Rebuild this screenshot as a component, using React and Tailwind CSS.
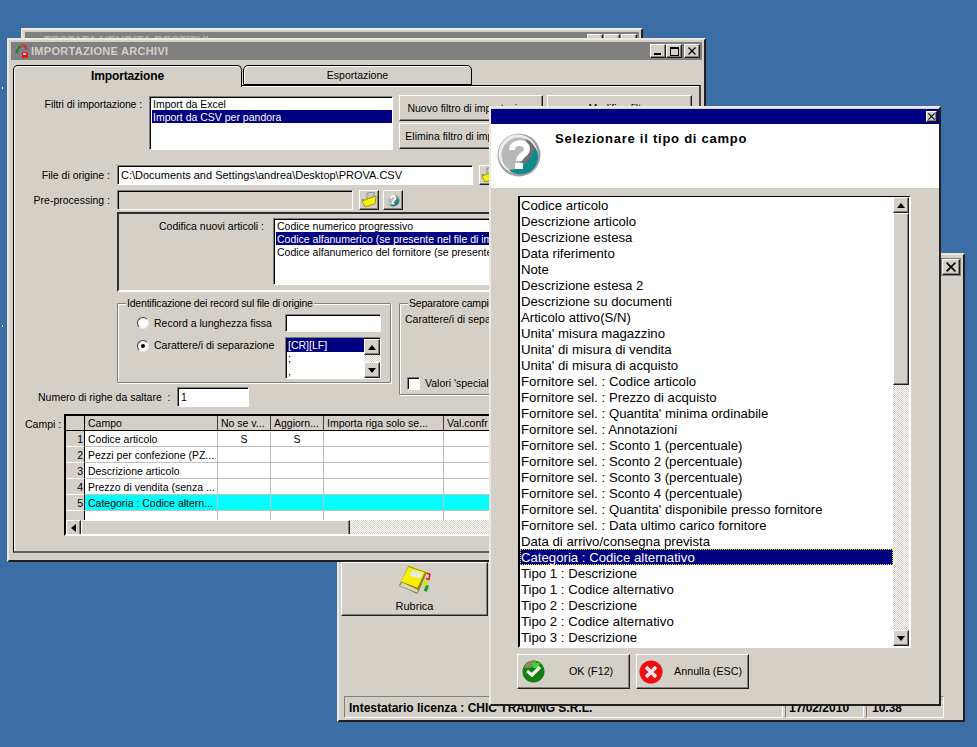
const raised = "border border-t-white border-l-white border-r-[#202020] border-b-[#202020] shadow-[inset_-1px_-1px_0_#808080] bg-[#d4d0c8]";
const sunken = "border border-t-[#808080] border-l-[#808080] border-r-white border-b-white shadow-[inset_1px_1px_0_#000000]";
const frame = "border-2 border-t-[#ece9e1] border-l-[#ece9e1] border-r-[#202020] border-b-[#202020] bg-[#d4d0c8]";
const checker = "bg-[repeating-conic-gradient(#d4d0c8_0_25%,#ffffff_0_50%)] bg-size-[2px_2px]";

const campi = [
  "Codice articolo",
  "Descrizione articolo",
  "Descrizione estesa",
  "Data riferimento",
  "Note",
  "Descrizione estesa 2",
  "Descrizione su documenti",
  "Articolo attivo(S/N)",
  "Unita' misura magazzino",
  "Unita' di misura di vendita",
  "Unita' di misura di acquisto",
  "Fornitore sel. : Codice articolo",
  "Fornitore sel. : Prezzo di acquisto",
  "Fornitore sel. : Quantita' minima ordinabile",
  "Fornitore sel. : Annotazioni",
  "Fornitore sel. : Sconto 1 (percentuale)",
  "Fornitore sel. : Sconto 2 (percentuale)",
  "Fornitore sel. : Sconto 3 (percentuale)",
  "Fornitore sel. : Sconto 4 (percentuale)",
  "Fornitore sel. : Quantita' disponibile presso fornitore",
  "Fornitore sel. : Data ultimo carico fornitore",
  "Data di arrivo/consegna prevista",
  "Categoria : Codice alternativo",
  "Tipo 1 : Descrizione",
  "Tipo 1 : Codice alternativo",
  "Tipo 2 : Descrizione",
  "Tipo 2 : Codice alternativo",
  "Tipo 3 : Descrizione",
];

const righe = [
  { n: "1", campo: "Codice articolo", a: "S", b: "S" },
  { n: "2", campo: "Pezzi per confezione (PZ..." },
  { n: "3", campo: "Descrizione articolo" },
  { n: "4", campo: "Prezzo di vendita (senza ..." },
  { n: "5", campo: "Categoria : Codice altern...", sel: true },
];

const HelpBall = ({ size }) => (
  <svg width={size} height={size} viewBox="0 0 44 44">
    <circle cx="22" cy="22" r="21.5" fill="#a0a0a0" />
    <circle cx="21" cy="21" r="19.5" fill="#ececec" />
    <circle cx="22" cy="22" r="17.5" fill="#b8b8b8" />
    <path d="M29 6A17.5 17.5 0 0 1 38 15C36 26 28 33 17 36C25 30 32 20 29 6Z" fill="#707070" />
    <path d="M38 14A17.5 17.5 0 0 1 12 37C25 36 35 27 38 14Z" fill="#0f8a8a" />
    <path d="M15 17C15 8 30 8 30 16C30 22 22 22 22 28" fill="none" stroke="#ffffff" strokeWidth="6" />
    <rect x="18" y="30" width="8" height="6" fill="#ffffff" />
  </svg>
);

const FolderIcon = () => (
  <svg width="16" height="16" viewBox="0 0 16 16">
    <path d="M6 1L13 0V10L6 11Z" fill="#c8c8c8" stroke="#707070" strokeWidth="0.6" />
    <path d="M1 9L9 6L15 4L14 12L4 15Z" fill="#f5f000" stroke="#7c7a10" strokeWidth="0.7" />
    <rect x="1" y="7" width="1.5" height="1.5" fill="#5c8a20" />
  </svg>
);

const TitleIcon = () => (
  <svg width="16" height="16" viewBox="0 0 16 16">
    <path d="M1 9L5 2L8 4L5 6L4 11Z" fill="#2e7d32" />
    <path d="M7 1L12 2L14 7L11 6L9 4Z" fill="#d03030" />
    <rect x="8" y="9" width="6" height="6" fill="#e02020" />
    <rect x="9" y="10" width="3" height="2" fill="#e8c0c0" />
  </svg>
);

const BookIcon = () => (
  <svg width="34" height="31" viewBox="0 0 33 30">
    <path d="M28 8L31 9L30 14L27 13" fill="none" stroke="#e01010" strokeWidth="1.4" />
    <path d="M27 19L30 20L28 26L25 25Z" fill="#12a030" />
    <path d="M26 14L29 15L27 21L24 20Z" fill="#e8e000" />
    <path d="M10 1L28 7L19 28L1 20Z" fill="#8a8410" />
    <path d="M10 2L26 7L19 22L3 16Z" fill="#f4f000" />
    <path d="M14 5L24 8L21 13L11 10Z" fill="#e8e8e8" />
    <path d="M2 20L19 27L19 24L4 17Z" fill="#d8d8c8" />
  </svg>
);

const CheckBall = () => (
  <svg width="23" height="23" viewBox="0 0 23 23">
    <circle cx="11.5" cy="11.5" r="11" fill="#12800f" />
    <path d="M2 8A10 10 0 0 1 15 1L9 8Z" fill="#8a8a60" />
    <path d="M10 3L18 3L16 8L11 8Z" fill="#30e030" />
    <path d="M5 11L10 15L18 7" fill="none" stroke="#f4f4f4" strokeWidth="3.2" />
  </svg>
);

const CrossBall = () => (
  <svg width="24" height="24" viewBox="0 0 24 24">
    <circle cx="12" cy="12" r="11.5" fill="#ee1010" />
    <path d="M7 7L17 17M17 7L7 17" fill="none" stroke="#f4e8e8" strokeWidth="3.6" />
  </svg>
);

const Arrow = ({ dir }) => {
  if (dir === "left") {
    return (
      <svg width="5" height="8" viewBox="0 0 5 8">
        <path d="M5 0V8L0 4Z" fill="#000000" />
      </svg>
    );
  }
  return (
    <svg width="8" height="5" viewBox="0 0 8 5">
      <path d={dir === "down" ? "M0 0H8L4 5Z" : "M0 5H8L4 0Z"} fill="#000000" />
    </svg>
  );
};

const ScrollBtn = ({ dir, className }) => (
  <div className={`${raised} flex items-center justify-center ${className}`}>
    <Arrow dir={dir} />
  </div>
);

const WinBtn = ({ children }) => (
  <div className={`${raised} w-[16px] h-[14px] flex items-center justify-center`}>{children}</div>
);

const CloseGlyph = ({ size = 8 }) => (
  <svg width={size} height={size} viewBox="0 0 8 8">
    <path d="M0.5 0.5L7.5 7.5M7.5 0.5L0.5 7.5" stroke="#000000" strokeWidth="1.4" />
  </svg>
);

const Rubrica = () => (
  <div className={`${raised} w-[147px] h-[54px] flex flex-col items-center pt-[2px] ml-[2px] shrink-0`}>
    <BookIcon />
    <span className="mt-[3px] text-[11px]">Rubrica</span>
  </div>
);

const BackWindows = () => (
  <>
    <div className={`${frame} absolute left-[21px] top-[28px] w-[622px] h-[100px]`}>
      <div className="m-[2px] h-[18px] bg-[#808080] flex items-center justify-between pl-[5px] pr-[2px] overflow-hidden">
        <span className="font-bold text-[#b0aea8] whitespace-nowrap pl-[14px]">TESTATA VENDITA RESTITUI</span>
        <div className="flex gap-[1px]">
          <WinBtn />
          <WinBtn />
          <WinBtn />
        </div>
      </div>
    </div>

    <div className={`${frame} absolute left-[337px] top-[253px] w-[628px] h-[469px] flex flex-col`}>
      <div className="h-[18px] mt-[3px] mx-[2px] bg-[#808080] flex justify-end items-center pr-[1px]">
        <div className={`${raised} w-[18px] h-[16px] flex items-center justify-center`}>
          <CloseGlyph size={10} />
        </div>
      </div>
      <div className="mt-[286px]">
        <Rubrica />
      </div>
      <div className="mt-[80px] ml-[5px] h-[22px] flex gap-[2px] font-bold">
        <div className="w-[439px] border border-t-[#808080] border-l-[#808080] border-r-white border-b-white flex items-center pl-[4px] pt-[2px]">
          Intestatario licenza : CHIC TRADING S.R.L.
        </div>
        <div className="w-[79px] border border-t-[#808080] border-l-[#808080] border-r-white border-b-white flex items-center pl-[3px] pt-[2px]">
          17/02/2010
        </div>
        <div className="w-[78px] border border-t-[#808080] border-l-[#808080] border-r-white border-b-white flex items-center pl-[5px] pt-[2px]">
          10.38
        </div>
      </div>
    </div>
  </>
);

const Tabs = () => (
  <div className="flex items-start ml-[4px] mt-[5px] h-[20px] relative z-10">
    <div className="w-[229px] h-[22px] bg-[#d4d0c8] border-t border-l border-r border-t-black border-l-black border-r-black rounded-t-[5px] shadow-[inset_1px_1px_0_#ffffff] flex items-center justify-center font-bold text-[12px] tracking-[-0.15px]">
      Importazione
    </div>
    <div className="w-[229px] ml-[1px] h-[20px] pt-[1px] bg-[#d4d0c8] border border-black rounded-t-[5px] shadow-[inset_1px_1px_0_#ffffff] flex items-center justify-center">
      Esportazione
    </div>
  </div>
);

const Radio = ({ checked }) => (
  <div className="w-[12px] h-[12px] rounded-full bg-white border border-t-[#404040] border-l-[#404040] border-r-[#e8e8e8] border-b-[#e8e8e8] flex items-center justify-center shrink-0">
    {checked && <div className="w-[4px] h-[4px] rounded-full bg-black" />}
  </div>
);

const GroupBox = ({ title, className, children }) => (
  <div className={`relative border border-[#808080] shadow-[inset_1px_1px_0_#ffffff,1px_1px_0_#ffffff] rounded-[1px] ${className}`}>
    <span className="absolute left-[8px] -top-[8px] bg-[#d4d0c8] px-[1px] whitespace-nowrap tracking-[-0.2px]">{title}</span>
    {children}
  </div>
);

const Griglia = () => (
  <div className="relative w-[640px] h-[122px] border-2 border-t-black border-l-black border-r-white border-b-white bg-white overflow-hidden">
    <div className="grid grid-cols-[19px_133px_53px_53px_120px_120px]">
      <div className="h-[15px] bg-[#d4d0c8] border-r border-b border-r-black border-b-black" />
      {["Campo", "No se v...", "Aggiorn...", "Importa riga solo se...", "Val.confr"].map((h) => (
        <div key={h} className="h-[15px] leading-[15px] bg-[#d4d0c8] border-b border-r border-b-black border-r-[#404040] whitespace-nowrap overflow-hidden pl-[3px]">
          {h}
        </div>
      ))}
    </div>
    <div className="grid grid-cols-[19px_133px_53px_53px_120px_120px] auto-rows-[16px]">
      {righe.map((r) => (
        <div key={r.n} className="contents">
          <div className="bg-[#d4d0c8] border-r border-b border-r-black border-b-white text-right pr-[1px] pt-[1px]">{r.n}</div>
          <div className={`border-r border-b border-[#c0c0c0] pl-[3px] pt-[1px] whitespace-nowrap overflow-hidden ${r.sel ? "bg-[#00ffff]" : ""}`}>{r.campo}</div>
          <div className={`border-r border-b border-[#c0c0c0] text-center pt-[1px] ${r.sel ? "bg-[#00ffff]" : ""}`}>{r.a}</div>
          <div className={`border-r border-b border-[#c0c0c0] text-center pt-[1px] ${r.sel ? "bg-[#00ffff]" : ""}`}>{r.b}</div>
          <div className={`border-r border-b border-[#c0c0c0] ${r.sel ? "bg-[#00ffff]" : ""}`} />
          <div className={`border-r border-b border-[#c0c0c0] ${r.sel ? "bg-[#00ffff]" : ""}`} />
        </div>
      ))}
      <div className="bg-[#d4d0c8] border-r border-r-black h-[9px]" />
      <div className="border-r border-[#c0c0c0] h-[9px]" />
      <div className="border-r border-[#c0c0c0] h-[9px]" />
      <div className="border-r border-[#c0c0c0] h-[9px]" />
      <div className="border-r border-[#c0c0c0] h-[9px]" />
      <div className="border-r border-[#c0c0c0] h-[9px]" />
    </div>
    <div className={`absolute left-0 right-0 top-[104px] h-[16px] flex ${checker}`}>
      <ScrollBtn dir="left" className="w-[15px] h-[16px]" />
      <div className={`${raised} w-[269px] h-[16px]`} />
    </div>
  </div>
);

const ImportWindow = () => (
  <div className={`${frame} absolute left-[7px] top-[38px] w-[699px] h-[524px] text-[10.5px]`}>
    <div className="mx-[2px] mt-[2px] h-[18px] bg-[#808080] flex items-center justify-between pl-[3px] pr-[2px]">
      <div className="flex items-center">
        <TitleIcon />
        <span className="ml-[1px] font-bold text-[#d4d0c8] text-[11px] tracking-[0.3px] whitespace-nowrap">IMPORTAZIONE ARCHIVI</span>
      </div>
      <div className="flex">
        <WinBtn>
          <div className="w-[7px] h-[2px] bg-black mt-[6px] -ml-[1px]" />
        </WinBtn>
        <WinBtn>
          <div className="w-[9px] h-[9px] border border-black border-t-2" />
        </WinBtn>
        <div className="ml-[2px]">
          <WinBtn>
            <CloseGlyph />
          </WinBtn>
        </div>
      </div>
    </div>
    <Tabs />
    <div className="ml-[4px] w-[688px] h-[468px] border border-black border-b-2 border-r-2 border-b-[#606060] border-r-[#404040] shadow-[inset_1px_1px_0_#ffffff] pl-[1px]">
      <div className="flex mt-[9px]">
        <div className="w-[128px] text-right pt-[2px] pr-[1px] whitespace-nowrap tracking-[-0.1px]">Filtri di importazione :</div>
        <div className={`${sunken} ml-[6px] mt-[1px] w-[244px] h-[54px] bg-white pl-[2px]`}>
          <div className="h-[13px] leading-[15px] pl-[1px]">Import da Excel</div>
          <div className="h-[13px] leading-[15px] pl-[1px] bg-[#000080] text-white">Import da CSV per pandora</div>
        </div>
        <div className="ml-[6px] flex flex-col gap-[2px]">
          <button className={`${raised} w-[144px] h-[26px] whitespace-nowrap overflow-hidden`}>Nuovo filtro di importazione</button>
          <button className={`${raised} w-[144px] h-[26px] whitespace-nowrap overflow-hidden`}>Elimina filtro di importazione</button>
        </div>
        <button className={`${raised} ml-[4px] w-[145px] h-[26px]`}>Modifica filtro</button>
      </div>

      <div className="flex mt-[15px] h-[20px] items-center">
        <div className="w-[95px] text-right pt-[1px]">File di origine :</div>
        <div className={`${sunken} ml-[7px] w-[356px] h-[20px] bg-white pl-[3px] leading-[18px] whitespace-nowrap text-[11px]`}>
          C:\Documents and Settings\andrea\Desktop\PROVA.CSV
        </div>
        <button className={`${raised} ml-[6px] w-[20px] h-[20px] flex items-center justify-center`}>
          <FolderIcon />
        </button>
      </div>

      <div className="flex mt-[5px] h-[20px] items-center">
        <div className="w-[95px] text-right">Pre-processing :</div>
        <div className={`${sunken} ml-[7px] w-[236px] h-[20px]`} />
        <button className={`${raised} ml-[6px] w-[20px] h-[20px] flex items-center justify-center`}>
          <FolderIcon />
        </button>
        <button className={`${raised} ml-[4px] w-[20px] h-[20px] flex items-center justify-center`}>
          <HelpBall size={14} />
        </button>
      </div>

      <div className="flex mt-[2px] ml-[102px] h-[80px] w-[583px] border-2 border-t-[#303030] border-l-[#303030] border-r-white border-b-white pt-[4px]">
        <div className="w-[146px] text-right pr-[1px] whitespace-nowrap pt-[1px]">Codifica nuovi articoli :</div>
        <div className={`${sunken} ml-[8px] w-[420px] h-[67px] bg-white pl-[2px] whitespace-nowrap`}>
          <div className="h-[13px] leading-[15px] pl-[1px]">Codice numerico progressivo</div>
          <div className="h-[13px] leading-[15px] pl-[1px] bg-[#000080] text-white">Codice alfanumerico (se presente nel file di importazione)</div>
          <div className="h-[13px] leading-[15px] pl-[1px]">Codice alfanumerico del fornitore (se presente nel file)</div>
        </div>
      </div>

      <div className="flex mt-[11px]">
        <div className="w-[376px] shrink-0">
          <GroupBox title="Identificazione dei record sul file di origine" className="ml-[102px] w-[274px] h-[80px] pl-[19px]">
            <div className="flex items-center mt-[10px] h-[18px]">
              <Radio />
              <span className="ml-[5px] w-[131px] whitespace-nowrap">Record a lunghezza fissa</span>
              <div className={`${sunken} w-[96px] h-[18px] bg-white`} />
            </div>
            <div className="flex mt-[5px]">
              <div className="mt-[3px]">
                <Radio checked />
              </div>
              <span className="ml-[5px] w-[131px] whitespace-nowrap mt-[1px]">Carattere/i di separazione</span>
              <div className={`${sunken} relative w-[96px] h-[42px] bg-white pl-[1px] overflow-hidden`}>
                <div className="w-[78px] h-[14px] leading-[14px] bg-[#000080] text-white pl-[1px]">[CR][LF]</div>
                <div className="h-[13px] leading-[13px] pl-[1px]">;</div>
                <div className="h-[13px] leading-[13px] pl-[1px]">,</div>
                <div className={`${checker} absolute right-[0px] top-[1px] w-[16px] h-[39px] flex flex-col justify-between`}>
                  <ScrollBtn className="h-[16px]" />
                  <ScrollBtn dir="down" className="h-[16px]" />
                </div>
              </div>
            </div>
          </GroupBox>
          <div className="flex items-center mt-[4px] h-[20px]">
            <span className="ml-[23px] w-[139px] whitespace-nowrap">Numero di righe da saltare&nbsp; :</span>
            <div className={`${sunken} w-[72px] h-[20px] bg-white pl-[3px] leading-[18px]`}>1</div>
          </div>
        </div>
        <GroupBox title="Separatore campi" className="ml-[8px] w-[280px] h-[92px] pl-[5px] pt-[8px]">
          <div className="whitespace-nowrap">Carattere/i di separazione</div>
          <div className="flex items-center mt-[49px] ml-[2px] gap-[5px]">
            <div className={`${sunken} w-[13px] h-[13px] bg-white`} />
            <span className="whitespace-nowrap">Valori 'speciali'</span>
          </div>
        </GroupBox>
      </div>

      <div className="flex mt-[7px]">
        <div className="w-[49px] shrink-0 pl-[10px] pt-[3px] whitespace-nowrap">Campi :</div>
        <Griglia />
      </div>
    </div>
  </div>
);

const TipoCampoDialog = () => (
  <div className={`${frame} absolute left-[489px] top-[106px] w-[452px] h-[600px]`}>
    <div className="mt-[1px] h-[15px] bg-[#000080] flex items-center justify-end pr-[2px]">
      <div className={`${raised} w-[11px] h-[11px] flex items-center justify-center`}>
        <CloseGlyph size={7} />
      </div>
    </div>
    <div className="h-[64px] bg-white flex pl-[6px] pt-[9px]">
      <HelpBall size={44} />
      <div className="ml-[14px] -mt-[2px] text-[13px] font-bold tracking-[0.75px] whitespace-nowrap">Selezionare il tipo di campo</div>
    </div>
    <div className="ml-[27px] mt-[8px] w-[393px] h-[452px] border-2 border-t border-t-black border-l-black border-r-white border-b-white bg-white flex">
      <div className="flex-1 overflow-hidden text-[13.2px]">
        {campi.map((c) => (
          <div
            key={c}
            className={`h-[16px] leading-[16px] pt-[1px] pl-[1px] whitespace-nowrap ${c.startsWith("Categoria") ? "bg-[#000080] text-white outline-1 outline-dotted outline-offset-[-1px] outline-[#e8e800]" : ""}`}
          >
            {c}
          </div>
        ))}
      </div>
      <div className={`w-[16px] flex flex-col ${checker}`}>
        <ScrollBtn className="h-[16px] shrink-0" />
        <div className={`${raised} h-[172px] shrink-0`} />
        <div className="flex-1" />
        <ScrollBtn dir="down" className="h-[16px] shrink-0" />
      </div>
    </div>
    <div className="flex ml-[26px] mt-[6px] gap-[6px] text-[10.75px]">
      <button className={`${raised} w-[113px] h-[35px] flex items-center pl-[4px]`}>
        <CheckBall />
        <span className="ml-[24px]">OK (F12)</span>
      </button>
      <button className={`${raised} w-[113px] h-[35px] flex items-center pl-[2px]`}>
        <CrossBall />
        <span className="ml-[11px] whitespace-nowrap">Annulla (ESC)</span>
      </button>
    </div>
  </div>
);

export default function App() {
  return (
    <div className="relative w-[977px] h-[747px] overflow-hidden bg-[#3a6ea5] text-[12px] text-black font-['Liberation_Sans',Arial,sans-serif] leading-[15px]">
      <div className="absolute left-[2px] top-[87px] w-[1px] h-[2px] bg-white" />
      <div className="absolute left-[2px] top-[325px] w-[1px] h-[2px] bg-white" />
      <BackWindows />
      <ImportWindow />
      <TipoCampoDialog />
    </div>
  );
}
